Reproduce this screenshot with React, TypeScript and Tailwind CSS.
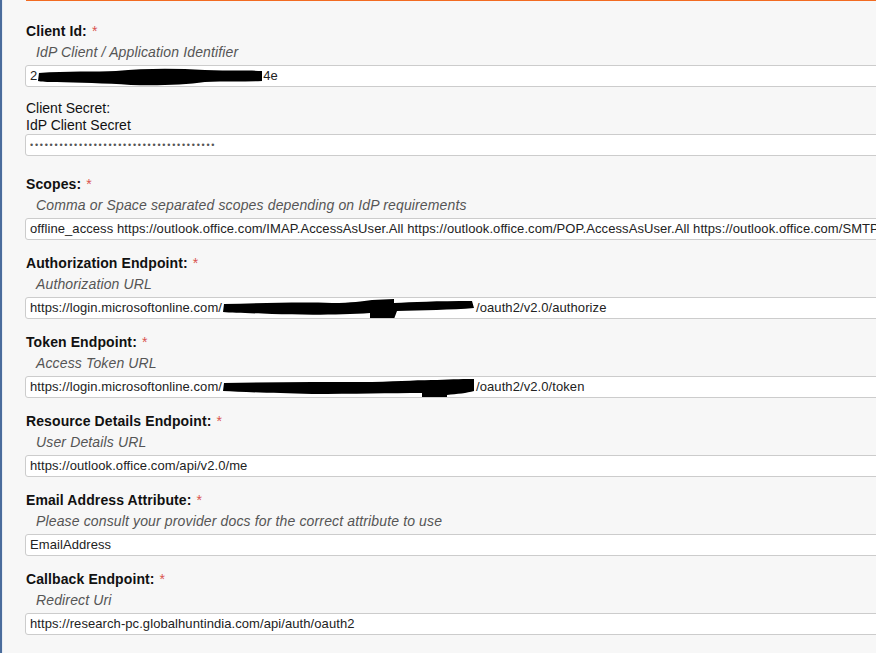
import React from "react";

const font = { fontFamily: '"Liberation Sans", Arial, sans-serif' };

function Blob1() {
  return (
    <svg width="226" height="20" viewBox="0 0 229 20" className="inline-block align-middle -my-[4px]">
      <path
        d="M2 6 C 30 4, 60 5, 80 4 C 110 1, 140 1, 170 3 C 195 4, 215 3, 228 4 L 228 14 C 210 15, 190 14, 170 15 C 150 18, 120 19, 95 18 C 70 16, 40 16, 20 15 C 10 15, 4 15, 1 14 Z"
        fill="#000"
      />
    </svg>
  );
}

function BlobAuth() {
  return (
    <svg width="254" height="22" viewBox="0 0 254 22" className="inline-block align-middle -my-[5px]">
      <path
        d="M2 6 C 40 5, 80 4, 110 5 C 130 5, 140 3, 150 2 L 172 1 L 172 5 C 190 4, 215 3, 250 3 L 252 10 C 230 12, 200 12, 175 13 L 172 21 L 148 21 L 148 15 C 120 17, 80 17, 50 16 C 25 15, 10 15, 1 14 Z"
        fill="#000"
      />
    </svg>
  );
}

function BlobToken() {
  return (
    <svg width="254" height="22" viewBox="0 0 254 22" className="inline-block align-middle -my-[5px]">
      <path
        d="M2 6 C 50 5, 100 5, 150 5 C 180 4, 200 3, 215 3 C 230 2, 245 2, 252 2 L 252 14 C 245 16, 235 17, 225 18 L 225 21 L 200 21 L 200 16 C 170 16, 130 17, 90 17 C 50 16, 20 15, 1 14 Z"
        fill="#000"
      />
    </svg>
  );
}

function Input({ children }: { children: React.ReactNode }) {
  return (
    <div className="mt-[3px] h-[22px] w-[900px] border border-[#cccccc] rounded-[3px] bg-white pl-[4px] text-[13px] leading-[20px] tracking-[0.08px] text-[#222] whitespace-nowrap overflow-hidden">
      {children}
    </div>
  );
}

function Field({
  label,
  hint,
  children,
}: {
  label: string;
  hint: string;
  children: React.ReactNode;
}) {
  return (
    <div className="mb-[13px]">
      <div className="h-5 leading-5 pl-px text-[14px] font-bold tracking-[0.1px] text-[#111]">
        {label}
        <span className="ml-[5px] font-normal text-[#d9534f]">*</span>
      </div>
      <div className="mt-px h-5 leading-5 pl-[11px] text-[14px] italic tracking-[0.14px] text-[#555]">{hint}</div>
      <Input>{children}</Input>
    </div>
  );
}

export default function App() {
  return (
    <div className="w-[876px] h-[653px] overflow-hidden bg-[#f7f7f7] flex" style={font}>
      <div className="w-[2px] bg-[#4a6c9c] shrink-0" />
      <div className="w-px bg-[#e8edf3] shrink-0" />
      <div className="flex-1 min-w-0">
        <div className="ml-[23px] h-px bg-[#f26b21]" />
        <div className="pl-[22px] pt-[20px]">
          <Field label="Client Id:" hint="IdP Client / Application Identifier">
            2<Blob1 />4e
          </Field>

          <div className="mb-[18px]">
            <div className="pl-px text-[14px] leading-[17px] text-[#111]">Client Secret:</div>
            <div className="pl-px text-[14px] leading-[17px] text-[#111]">IdP Client Secret</div>
            <div className="h-[22px] w-[900px] border border-[#cccccc] rounded-[3px] bg-white pl-[4px] text-[9px] leading-[20px] tracking-[1.75px] text-[#555] whitespace-nowrap overflow-hidden">
              {"•".repeat(38)}
            </div>
          </div>

          <Field label="Scopes:" hint="Comma or Space separated scopes depending on IdP requirements">
            offline_access https://outlook.office.com/IMAP.AccessAsUser.All https://outlook.office.com/POP.AccessAsUser.All https://outlook.office.com/SMTP.Send
          </Field>

          <Field label="Authorization Endpoint:" hint="Authorization URL">
            https://login.microsoftonline.com/<BlobAuth />/oauth2/v2.0/authorize
          </Field>

          <Field label="Token Endpoint:" hint="Access Token URL">
            https://login.microsoftonline.com/<BlobToken />/oauth2/v2.0/token
          </Field>

          <Field label="Resource Details Endpoint:" hint="User Details URL">
            https://outlook.office.com/api/v2.0/me
          </Field>

          <Field label="Email Address Attribute:" hint="Please consult your provider docs for the correct attribute to use">
            EmailAddress
          </Field>

          <Field label="Callback Endpoint:" hint="Redirect Uri">
            https://research-pc.globalhuntindia.com/api/auth/oauth2
          </Field>
        </div>
      </div>
    </div>
  );
}
